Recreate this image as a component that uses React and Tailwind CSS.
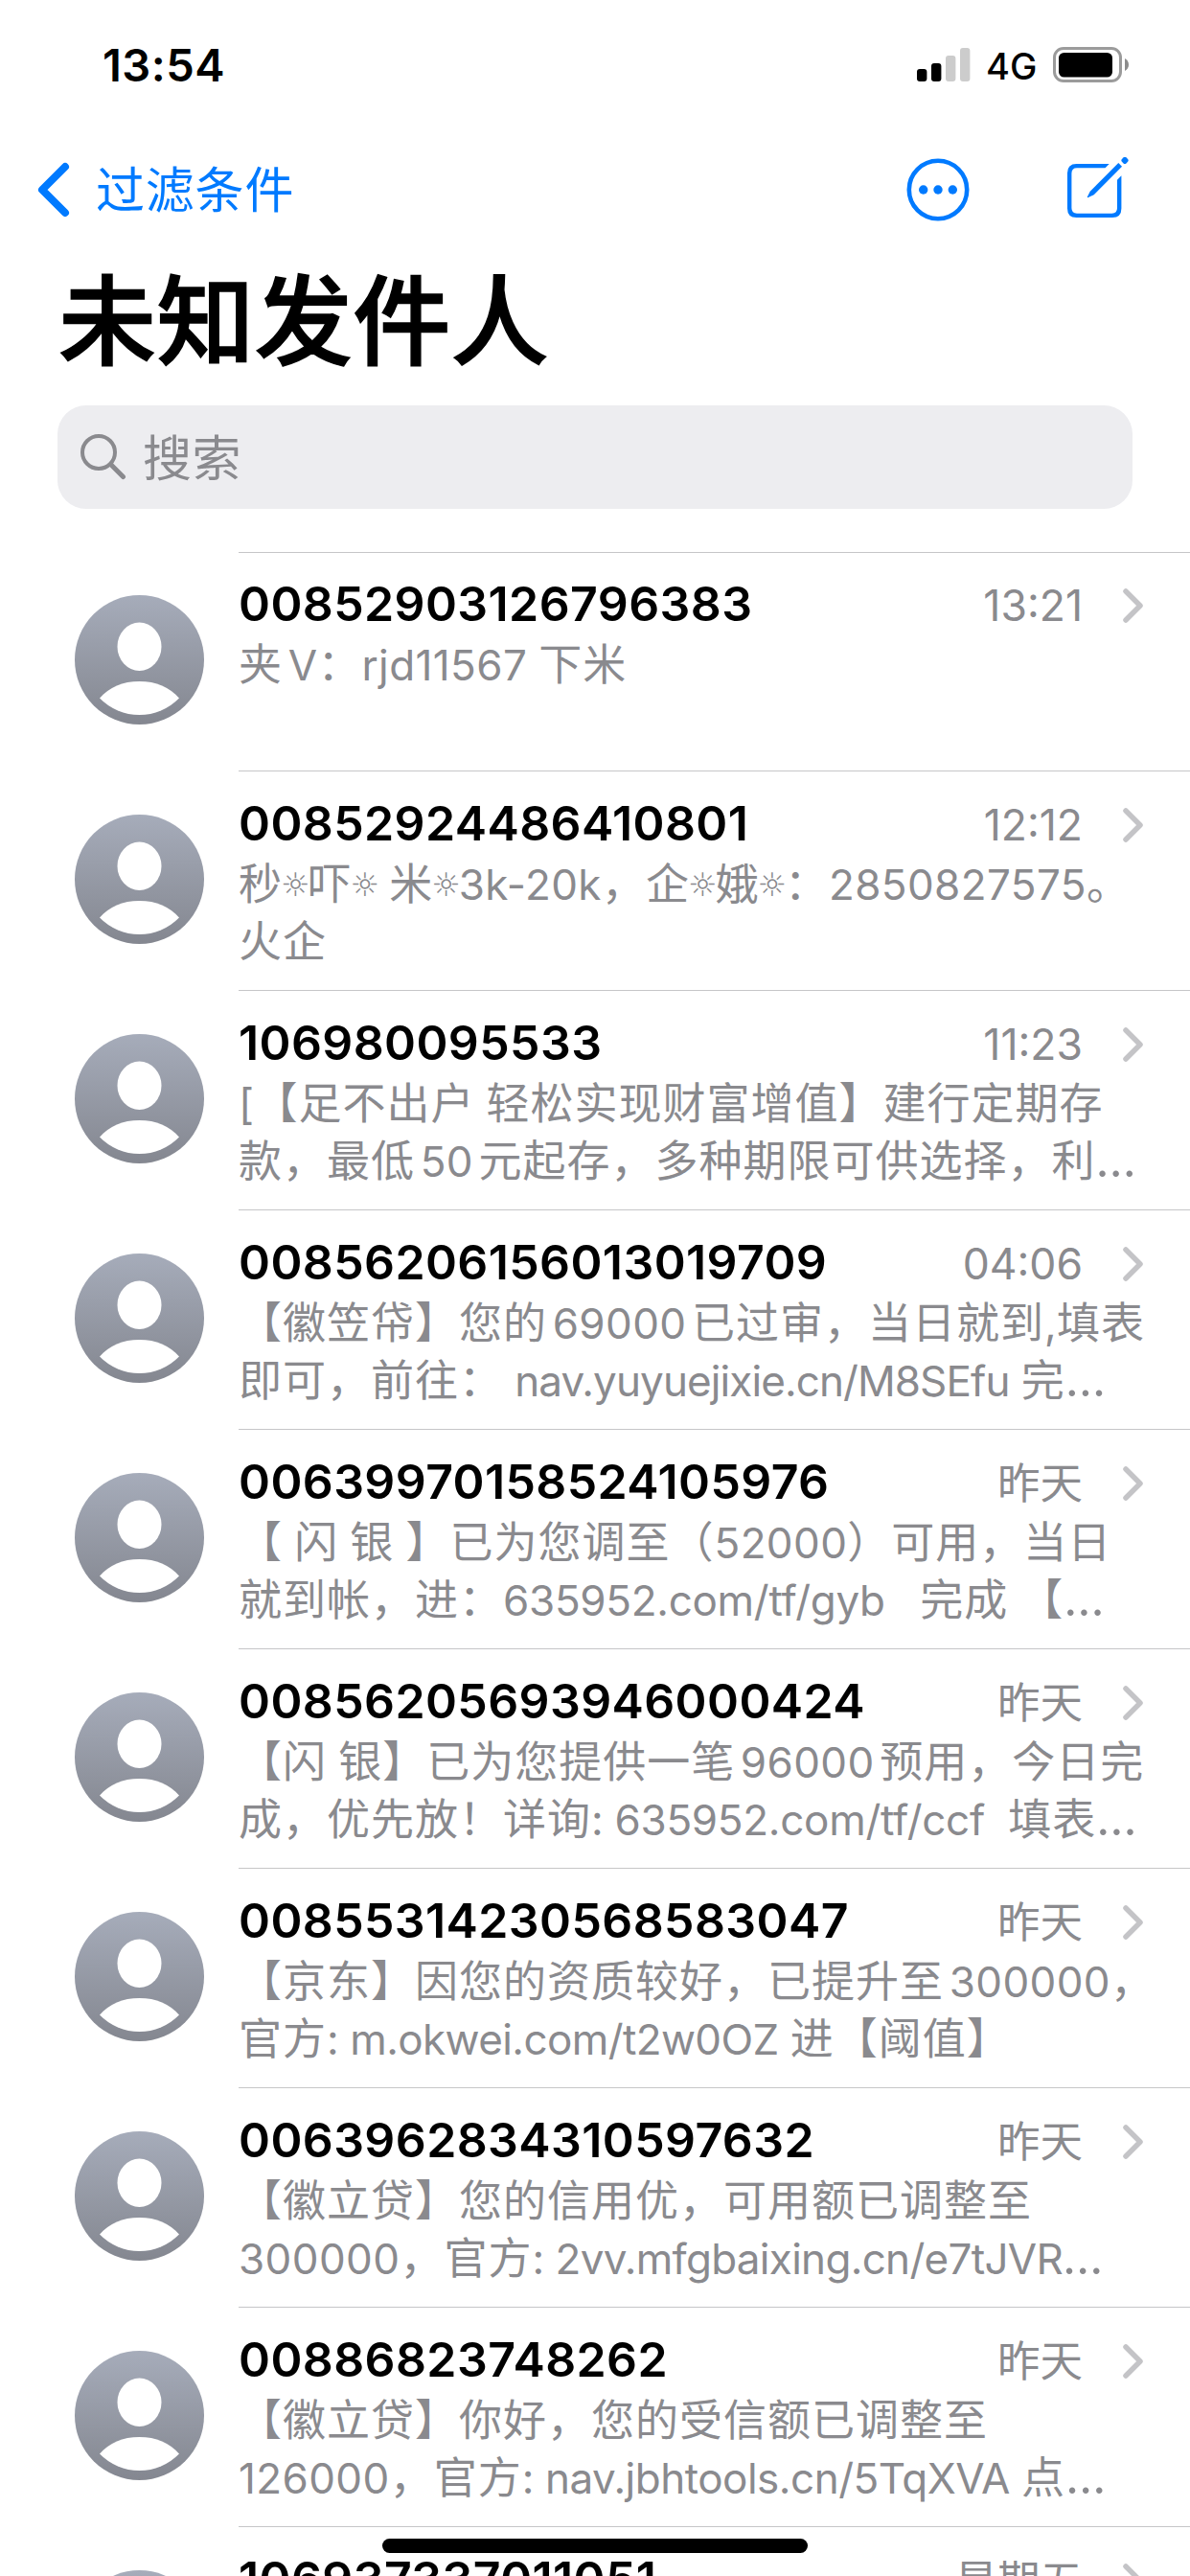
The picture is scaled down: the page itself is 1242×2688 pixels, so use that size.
const messages = [
  {
    from: "00852903126796383",
    time: "13:21",
    lines: [{ text: "夹V：rjd11567 下米", latin: "tracking-[0.4px]" }],
  },
  {
    from: "00852924486410801",
    time: "12:12",
    lines: [{ text: "秒☼吓☼ 米☼3k-20k，企☼娥☼：2850827575。" }, { text: "火企" }],
  },
  {
    from: "106980095533",
    time: "11:23",
    lines: [{ text: "[【足不出户 轻松实现财富增值】建行定期存" }, { text: "款，最低50元起存，多种期限可供选择，利…" }],
  },
  {
    from: "00856206156013019709",
    time: "04:06",
    lines: [
      { text: "【徽笠帒】您的69000已过审，当日就到,填表" },
      { text: "即可，前往： nav.yuyuejixie.cn/M8SEfu 完…", latin: "tracking-[-0.9px]" },
    ],
  },
  {
    from: "00639970158524105976",
    time: "昨天",
    lines: [
      { text: "【 闪 银 】已为您调至（52000）可用，当日" },
      { text: "就到帐，进：635952.com/tf/gyb   完成 【…", latin: "tracking-[-0.3px]" },
    ],
  },
  {
    from: "00856205693946000424",
    time: "昨天",
    lines: [
      { text: "【闪 银】已为您提供一笔96000预用，今日完" },
      { text: "成，优先放！详询: 635952.com/tf/ccf  填表…", latin: "tracking-[-0.3px]" },
    ],
  },
  {
    from: "00855314230568583047",
    time: "昨天",
    lines: [
      { text: "【京东】因您的资质较好，已提升至300000，" },
      { text: "官方: m.okwei.com/t2w0OZ 进【阈值】", latin: "tracking-[-0.6px]" },
    ],
  },
  {
    from: "0063962834310597632",
    time: "昨天",
    lines: [
      { text: "【徽立贷】您的信用优，可用额已调整至" },
      { text: "300000，官方: 2vv.mfgbaixing.cn/e7tJVR…", latin: "tracking-[-0.7px]" },
    ],
  },
  {
    from: "00886823748262",
    time: "昨天",
    lines: [
      { text: "【徽立贷】你好，您的受信额已调整至" },
      { text: "126000，官方: nav.jbhtools.cn/5TqXVA 点…", latin: "tracking-[-0.5px]" },
    ],
  },
  { from: "106937337011051", time: "星期五", lines: [] },
];

export default function App() {
  return (
    <div className="relative w-[1242px] h-[2688px] overflow-hidden bg-white text-black font-['Inter','Noto_Sans_CJK_SC',sans-serif] [text-autospace:normal] [text-spacing-trim:space-all]">
      <StatusBar />
      <NavBar />
      <h1 className="h-[148px] pl-[61px] text-[102px] leading-[145px] font-medium tracking-[0.4px] [-webkit-text-stroke:1.5px_black]">未知发件人</h1>
      <SearchField />
      <div className="mt-[45px]">
        {messages.map((message) => (
          <MessageRow key={message.from} {...message} />
        ))}
      </div>
      <div className="absolute left-[399px] top-[2649px] w-[444px] h-[15px] rounded-full bg-black" />
    </div>
  );
}

function StatusBar() {
  return (
    <div className="flex h-[132px] pl-[107px] pr-[63px] justify-between items-start">
      <span className="mt-[40px] text-[47px] leading-[56px] font-semibold tracking-[0.5px]">13:54</span>
      <div className="flex items-start">
        <svg className="mt-[50px]" width="56" height="36" viewBox="0 0 56 36">
          <rect x="0" y="22" width="10.4" height="13" rx="3" fill="#000" />
          <rect x="15" y="16" width="10.4" height="19" rx="3" fill="#000" />
          <rect x="30" y="8" width="10.4" height="27" rx="3" fill="#ccc" />
          <rect x="45" y="0" width="10.4" height="35" rx="3" fill="#ccc" />
        </svg>
        <span className="w-[70px] mt-[46px] ml-[16px] text-[38px] leading-[46px] font-medium">4G</span>
        <svg className="mt-[48px]" width="80" height="40" viewBox="0 0 80 40">
          <rect x="1.5" y="2.5" width="69" height="34" rx="9.5" fill="none" stroke="#9b9b9b" strokeWidth="3" />
          <rect x="6" y="7" width="56" height="25.5" rx="5.5" fill="#000" />
          <path d="M75 13 C80.3 15.5 80.3 23.5 75 26 Z" fill="#8c8c8c" />
        </svg>
      </div>
    </div>
  );
}

function NavBar() {
  return (
    <div className="flex h-[132px] pl-[38px] pr-[62px] items-center justify-between text-[#007aff]">
      <div className="flex items-center">
        <svg width="36" height="60" viewBox="0 0 36 60" fill="none" stroke="currentColor" strokeWidth="8" strokeLinecap="round" strokeLinejoin="round">
          <path d="M30 6 L6 30 L30 54" />
        </svg>
        <span className="ml-[26px] mt-[2px] text-[51px] leading-[60px] tracking-[0.8px]">过滤条件</span>
      </div>
      <div className="flex items-center">
        <svg className="mr-[100px]" width="66" height="66" viewBox="0 0 66 66">
          <circle cx="33" cy="33" r="30.2" fill="none" stroke="currentColor" strokeWidth="4.6" />
          <circle cx="17.7" cy="33" r="4.7" fill="currentColor" />
          <circle cx="33" cy="33" r="4.7" fill="currentColor" />
          <circle cx="48.3" cy="33" r="4.7" fill="currentColor" />
        </svg>
        <svg width="68" height="68" viewBox="0 0 68 68" fill="currentColor">
          <path
            d="M45.7 7 H11.5 Q2 7 2 16.5 V53.5 Q2 63 11.5 63 H49 Q58.4 63 58.4 53.5 V19.3 L54 23.7 V53 Q54 58.7 48.5 58.7 H12 Q6.4 58.7 6.4 53 V17 Q6.4 11.3 12 11.3 H41.5 Z"
          />
          <path d="M55.3 6 L59 9.7 L29.7 39.3 L23.3 42.2 Q22.6 42.2 22.8 41.5 L25.7 35.7 Z" />
          <rect x="58.8" y="0.2" width="6.4" height="6.4" rx="2.4" transform="rotate(45 62 3.4)" />
        </svg>
      </div>
    </div>
  );
}

function SearchField() {
  return (
    <div className="flex items-center h-[108px] mx-[60px] mt-[11px] pl-[24px] rounded-[30px] bg-[#ededf0] text-[#8a8a8e]">
      <svg width="48" height="48" viewBox="0 0 48 48" fill="none" stroke="currentColor" strokeLinecap="round">
        <circle cx="19" cy="19" r="17" strokeWidth="4" />
        <path d="M32 32 L44.5 44.5" strokeWidth="5" />
      </svg>
      <span className="ml-[17px] mt-[3px] text-[51px] leading-[60px] tracking-[0.5px]">搜索</span>
    </div>
  );
}

function MessageRow({ from, time, lines }) {
  return (
    <div className="group flex h-[229px] first:h-[228px] pl-[78px]">
      <Avatar />
      <div className="w-[993px] ml-[36px] shrink-0 border-t border-[#c6c6c8] pt-[24px] group-first:pt-[23px]">
        <div className="flex h-[64px] items-start pr-[48px]">
          <span className="text-[50px] leading-[60px] font-semibold tracking-[0.4px]">{from}</span>
          <span className="ml-auto mt-[2px] text-[44.5px] leading-[60px] text-[#8a8a8e]">{time}</span>
          <svg className="ml-[42px] mt-[13px]" width="22" height="38" viewBox="0 0 22 38" fill="none" stroke="#c4c4c7" strokeWidth="5.5" strokeLinecap="round" strokeLinejoin="round">
            <path d="M3 4 L18 19 L3 34" />
          </svg>
        </div>
        {lines.map((line) => (
          <p key={line.text} className="h-[60px] text-[45px] leading-[60px] whitespace-pre text-[#8a8a8e] tracking-[1px] [word-spacing:-1.5px]">
            <PreviewText {...line} />
          </p>
        ))}
      </div>
    </div>
  );
}

// Latin runs are set tighter than the Chinese text, and the sun signs smaller
function PreviewText({ text, latin = "tracking-[0.4px]" }) {
  return text.split(/(☼|…|[!-~]+)/).map((part, i) => {
    if (part === "☼") {
      return (
        <span key={i} className="-mx-[2px] align-[4px] font-['DejaVu_Sans'] text-[34px] leading-none tracking-normal">☼</span>
      );
    }
    if (part === "…") {
      return <span key={i} className="text-[49px] leading-none">…</span>;
    }
    // plain numbers keep their own spacing beside a web address
    const tracking = /^\d+$/.test(part) ? "tracking-[0.4px]" : latin;
    return i % 2 ? <span key={i} className={`text-[44px] ${tracking}`}>{part}</span> : part;
  });
}

function Avatar() {
  return (
    <svg className="mt-[46px] group-first:mt-[45px] shrink-0" width="135" height="135" viewBox="0 0 135 135">
      <defs>
        <linearGradient id="avatar" x1="0" y1="0" x2="0" y2="1">
          <stop offset="0" stopColor="#a6acba" />
          <stop offset="1" stopColor="#848790" />
        </linearGradient>
      </defs>
      <circle cx="67.5" cy="67.5" r="67.5" fill="url(#avatar)" />
      <ellipse cx="67.5" cy="53.7" rx="23" ry="25.2" fill="#fff" />
      <path d="M26 107.5 C36 96 50 90 67.5 90 S99 96 109 107.5 A58 58 0 0 1 26 107.5 Z" fill="#fff" />
    </svg>
  );
}
